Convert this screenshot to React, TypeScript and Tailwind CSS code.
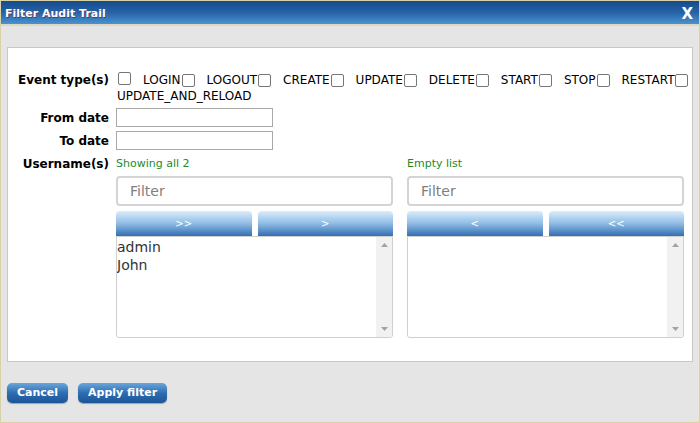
import React from "react";

const EVENT_TYPES = ["LOGIN", "LOGOUT", "CREATE", "UPDATE", "DELETE", "START", "STOP", "RESTART"];

function CheckBox() {
  return <span className="inline-block w-[13px] h-[13px] shrink-0 rounded-[2px] border border-[#767676] bg-white" />;
}

function ScrollBar() {
  return (
    <div className="w-[16px] bg-[#f1f1f1] flex flex-col justify-between items-center py-[6px]">
      <svg width="7" height="4" viewBox="0 0 7 4">
        <path d="M0 4 L3.5 0 L7 4 Z" fill="#a3a3a3" />
      </svg>
      <svg width="7" height="4" viewBox="0 0 7 4">
        <path d="M0 0 L3.5 4 L7 0 Z" fill="#a3a3a3" />
      </svg>
    </div>
  );
}

function ListColumn({ status, buttons, items }: { status: string; buttons: string[]; items: string[] }) {
  return (
    <div className="flex flex-col w-[277px]">
      <div className="h-[16px] leading-[16px] text-[11px] text-[#1f8a1f]">{status}</div>
      <input
        placeholder="Filter"
        className="mt-[4px] h-[30px] rounded-[4px] border-2 border-[#d4d4d4] bg-white pl-[12px] text-[14px] text-[#333] placeholder:text-[#808080] outline-none"
      />
      <div className="mt-[5px] flex gap-[6px]">
        {buttons.map((b) => (
          <div
            key={b}
            className="flex-1 h-[25px] rounded-t-[4px] bg-gradient-to-b from-[#dcedfb] via-[#8fbce6] to-[#336fb0] flex items-center justify-center text-white text-[10px]"
          >
            {b}
          </div>
        ))}
      </div>
      <div className="h-[102px] flex border border-[#cfcfcf] rounded-b-[3px] bg-white overflow-hidden">
        <div className="flex-1 text-[14px] leading-[18px] text-[#333] pt-[1px]">
          {items.map((i) => (
            <div key={i}>{i}</div>
          ))}
        </div>
        <ScrollBar />
      </div>
    </div>
  );
}

export default function App() {
  return (
    <div className="w-[700px] h-[423px] flex flex-col bg-[#e5e5e5] border border-[#d9d2a6] font-['DejaVu_Sans',Verdana,sans-serif] text-[12px] text-black overflow-hidden">
      {/* title bar */}
      <div className="h-[25px] shrink-0 flex items-center justify-between pl-[4px] pr-[6px] pt-[3px] bg-gradient-to-b from-[#164b8c] via-[#2563a6] to-[#4a92d0] border-b-2 border-[#ded8c2]">
        <span className="text-white font-bold text-[11px] [text-shadow:1px_1px_0_#5a3b5a]">Filter Audit Trail</span>
        <span className="text-white font-bold text-[15px] leading-none">X</span>
      </div>

      <div className="mx-[6px] mt-[21px] h-[315px] bg-white border border-[#c8c8c8] pt-[24px]">
        {/* event types */}
        <div className="flex">
          <div className="w-[101px] shrink-0 text-right font-bold leading-[16px]">Event type(s)</div>
          <div className="ml-[8px] flex-1">
            <div className="flex items-center h-[16px] leading-[16px]">
              <span className="ml-[1px]">
                <CheckBox />
              </span>
              {EVENT_TYPES.map((t) => (
                <React.Fragment key={t}>
                  <span className="ml-[12px] mr-[1px]">{t}</span>
                  <CheckBox />
                </React.Fragment>
              ))}
            </div>
            <div className="leading-[16px]">UPDATE_AND_RELOAD</div>
          </div>
        </div>

        {/* dates */}
        <div className="flex items-center mt-[4px]">
          <div className="w-[101px] shrink-0 text-right font-bold">From date</div>
          <input className="ml-[7px] w-[157px] h-[19px] border border-[#a9a9a9] bg-white outline-none" />
        </div>
        <div className="flex items-center mt-[4px]">
          <div className="w-[101px] shrink-0 text-right font-bold">To date</div>
          <input className="ml-[7px] w-[157px] h-[19px] border border-[#a9a9a9] bg-white outline-none" />
        </div>

        {/* usernames */}
        <div className="flex mt-[6px]">
          <div className="w-[101px] shrink-0 text-right font-bold leading-[16px]">Username(s)</div>
          <div className="ml-[7px] flex gap-[14px]">
            <ListColumn status="Showing all 2" buttons={[">>", ">"]} items={["admin", "John"]} />
            <ListColumn status="Empty list" buttons={["<", "<<"]} items={[]} />
          </div>
        </div>
      </div>

      <div className="mt-[21px] ml-[6px] flex gap-[10px]">
        <button className="h-[20px] px-[10px] rounded-[5px] bg-gradient-to-b from-[#6aa6dc] via-[#2d6db1] to-[#1b5596] text-white font-bold text-[11px] shadow-[0_1px_1px_rgba(0,0,0,0.3)]">
          Cancel
        </button>
        <button className="h-[20px] px-[10px] rounded-[5px] bg-gradient-to-b from-[#6aa6dc] via-[#2d6db1] to-[#1b5596] text-white font-bold text-[11px] shadow-[0_1px_1px_rgba(0,0,0,0.3)]">
          Apply filter
        </button>
      </div>
    </div>
  );
}
